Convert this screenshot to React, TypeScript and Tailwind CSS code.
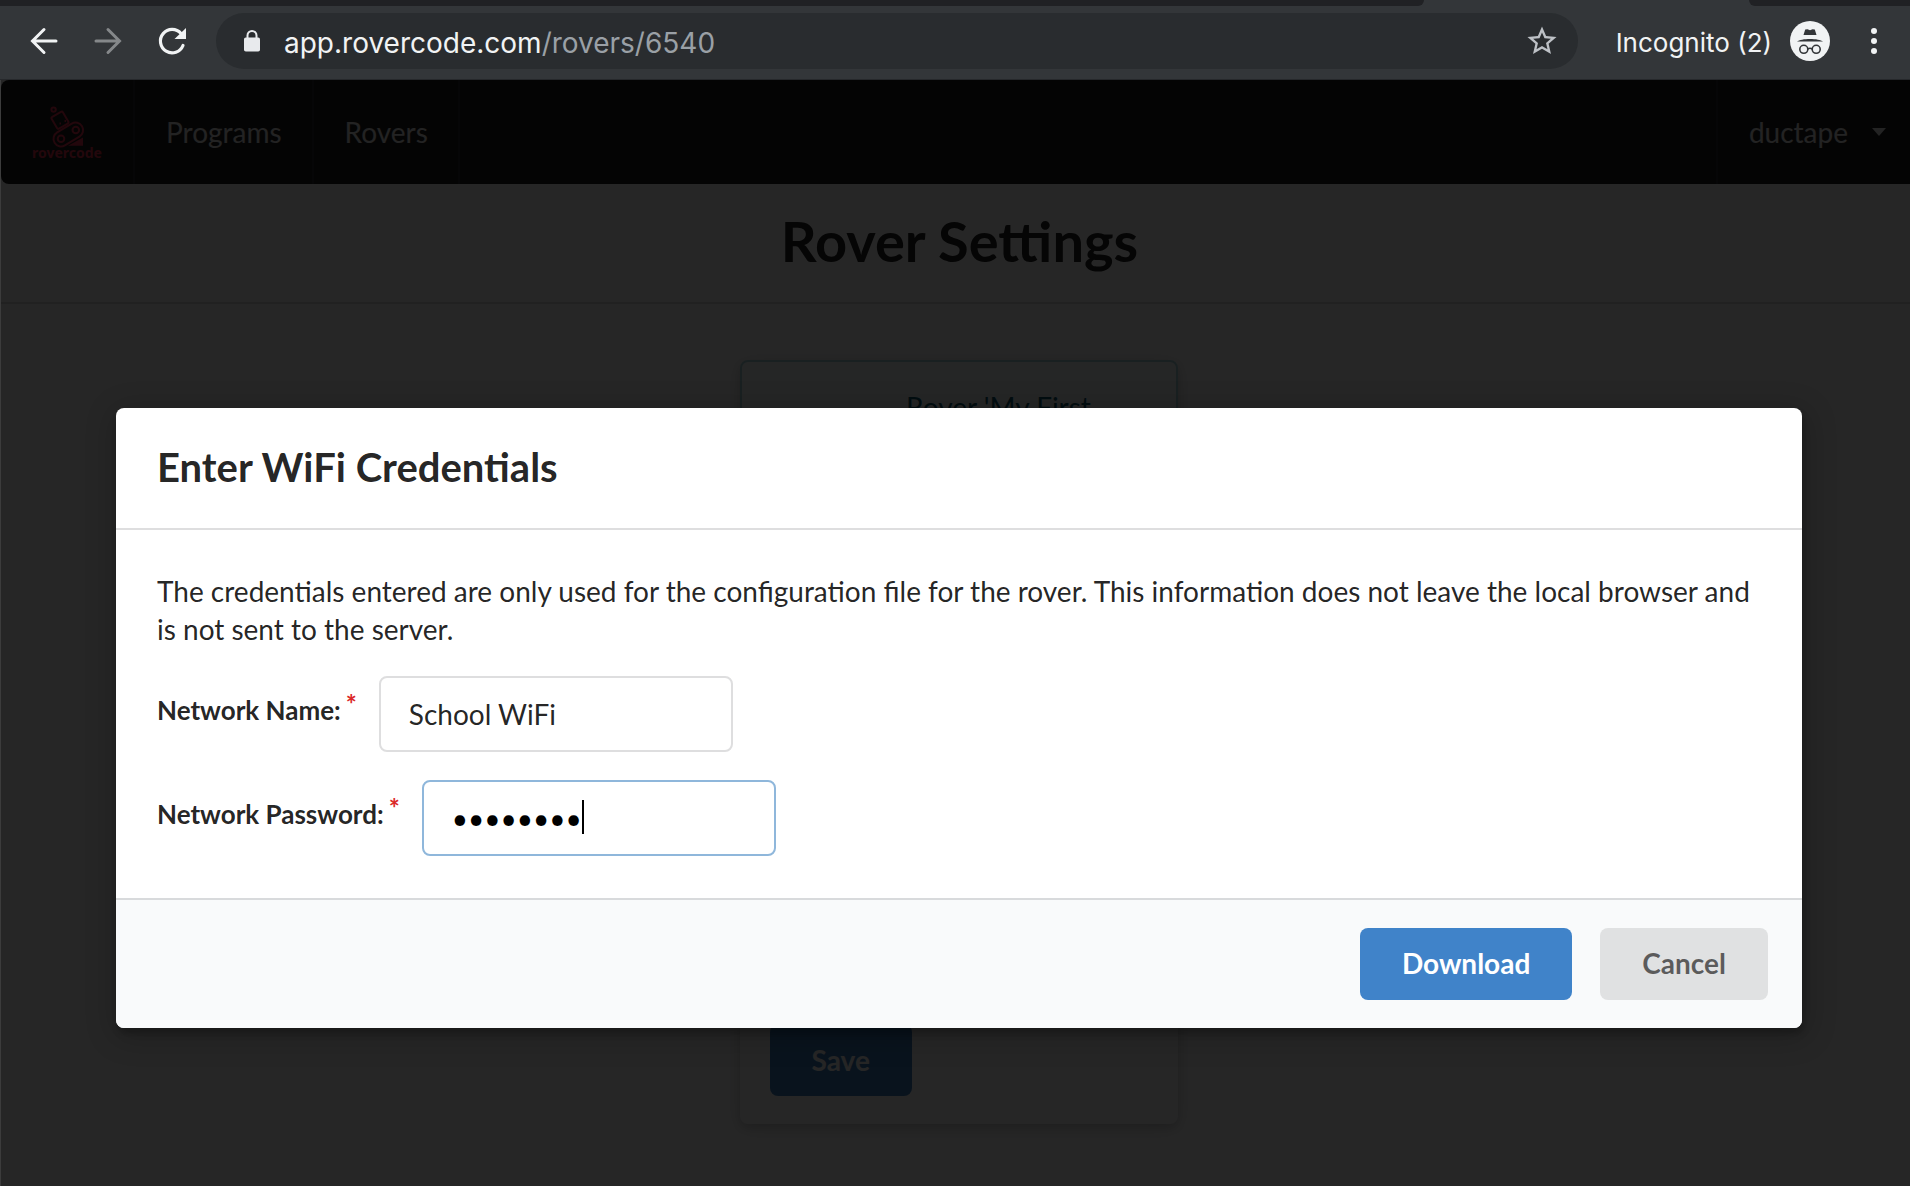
import type { ReactNode } from "react";

function BrowserBar() {
  return (
    <header className="bg-[#333639] font-['Inter',sans-serif]">
      <div className="flex h-1.5 justify-between">
        <div className="w-[1424px] rounded-br-xl bg-[#202124]" />
        <div className="w-[161px] rounded-bl-xl bg-[#202124]" />
      </div>
      <div className="flex h-[74px] items-center border-b border-[#26282b] pt-1 pr-6 pb-2 pl-7">
        <button aria-label="Back" className="mr-8 text-[#f1f3f4]">
          <svg width="32" height="32" viewBox="0 0 32 32" fill="none" stroke="currentColor" strokeWidth="3" strokeLinecap="round">
            <path d="M28 16H5M16 4.500L4.500 16 16 27.500" />
          </svg>
        </button>
        <button aria-label="Forward" className="mr-8 text-[#85888a]">
          <svg width="32" height="32" viewBox="0 0 32 32" fill="none" stroke="currentColor" strokeWidth="3" strokeLinecap="round">
            <path d="M4 16h23M16 4.500L27.500 16 16 27.500" />
          </svg>
        </button>
        <button aria-label="Reload" className="mr-7 text-[#f1f3f4]">
          <svg width="32" height="32" viewBox="0 0 32 32">
            <path d="M27 20.500A11.700 11.700 0 1 1 25 8.500" fill="none" stroke="currentColor" strokeWidth="3.200" strokeLinecap="round" />
            <path d="M30 3v11H18.500z" fill="currentColor" />
          </svg>
        </button>
        <div className="flex h-14 flex-1 items-center rounded-full bg-[#292c2f] pr-5 pl-7">
          <svg width="16" height="22" viewBox="0 0 16 22" className="mr-6 shrink-0" aria-hidden="true">
            <path d="M3.500 9V5.500a4.500 4.500 0 0 1 9 0V9" fill="none" stroke="#e8eaed" strokeWidth="2" />
            <rect x="0" y="7.500" width="16" height="14" rx="1.800" fill="#e8eaed" />
          </svg>
          <p className="flex-1 pt-1 text-[28px] text-[#9aa0a6]">
            <span className="text-[#f1f3f4]">app.rovercode.com</span>/rovers/6540
          </p>
          <button aria-label="Bookmark this page">
            <svg width="32" height="32" viewBox="1 1 22 22" fill="#bdc1c6">
              <path d="M22 9.240l-7.190-.62L12 2 9.190 8.630 2 9.240l5.460 4.730L5.820 21 12 17.270 18.180 21l-1.630-7.030L22 9.240zM12 15.400l-3.760 2.270 1-4.280-3.320-2.880 4.380-.38L12 6.100l1.710 4.040 4.380.38-3.320 2.880 1 4.280L12 15.400z" />
            </svg>
          </button>
        </div>
        <span className="ml-[38px] pt-1 text-[26px] text-[#f1f3f4]">Incognito (2)</span>
        <svg width="40" height="40" viewBox="0 0 40 40" className="mr-8 ml-[18px] shrink-0" aria-hidden="true">
          <circle cx="20" cy="20" r="20" fill="#f1f3f4" />
          <path d="M7 20.500c4-3.500 22-3.500 26 0z" fill="#333639" />
          <path d="M13.500 14l1.700-5.500 2.300-.3 2.500 1 2.500-1 2.300.3 1.700 5.500z" fill="#333639" />
          <g fill="none" stroke="#333639" strokeWidth="1.600">
            <circle cx="13.800" cy="28.300" r="4" />
            <circle cx="26.200" cy="28.300" r="4" />
            <path d="M17.800 28q2.200-1.400 4.400 0" />
          </g>
        </svg>
        <button aria-label="Menu" className="px-2">
          <svg width="8" height="28" viewBox="0 0 8 28" fill="#f1f3f4">
            <circle cx="4" cy="4" r="3" />
            <circle cx="4" cy="14" r="3" />
            <circle cx="4" cy="24" r="3" />
          </svg>
        </button>
      </div>
    </header>
  );
}

function Logo() {
  return (
    <svg width="72" height="64" viewBox="0 -5 72 64" fill="none" stroke="#e8304f" strokeWidth="2" role="img" aria-label="rovercode">
      <circle cx="22.600" cy="4.600" r="2.200" />
      <rect x="22.500" y="8.500" width="13" height="13.500" rx="1.500" transform="rotate(-30 29 15.250)" />
      <rect x="21.300" y="22" width="32" height="15" rx="7.500" transform="rotate(-31 37.300 29.500)" />
      <circle cx="30" cy="33.700" r="3.300" />
      <circle cx="44.800" cy="25" r="3.300" />
      <path d="M37 40.800l15-8.300v8.300z" fill="#e8304f" stroke="none" />
      <path d="M28.500 18.500h1.500M33.500 16h1.500" />
      <text x="36" y="52.500" textAnchor="middle" fill="#e8304f" stroke="none" fontFamily="Noto Sans" fontWeight="700" fontSize="14">rovercode</text>
    </svg>
  );
}

function NavItem({ children }: { children: ReactNode }) {
  return (
    <a href="#" className="flex items-center border-r-2 border-white/8 pr-[30px] pl-[31px] text-white/90">
      {children}
    </a>
  );
}

function SettingsPage() {
  return (
    <>
      <nav className="flex h-[104px] rounded-l-lg bg-[#1b1c1d]">
        <a href="#" className="flex items-center border-r-2 border-white/8 px-[30px]">
          <Logo />
        </a>
        <NavItem>Programs</NavItem>
        <NavItem>Rovers</NavItem>
        <button className="ml-auto flex items-center gap-6 border-l-2 border-white/8 pr-6 pl-[31px] text-white/90">
          ductape
          <svg width="14" height="8" viewBox="0 0 14 8" fill="currentColor" aria-hidden="true">
            <path d="M0 0h14L7 8z" />
          </svg>
        </button>
      </nav>
      <h1 className="border-b-2 border-[#222426]/15 pt-[22px] pb-[26px] pl-2 text-center text-[56px] leading-[70px] font-bold text-black/87">
        Rover Settings
      </h1>
      <main className="flex flex-1 justify-center pt-14 pb-[62px] pl-1.5">
        <section className="flex w-[438px] flex-col justify-between rounded-lg shadow-[0_4px_8px_rgba(34,36,38,0.12),0_4px_20px_rgba(34,36,38,0.15)]">
          <div className="rounded-lg border-2 border-[#a9d5de] bg-[#f8ffff] py-6 pl-20 text-center text-[#0e566c]">
            Rover 'My First
          </div>
          <form className="px-[30px] py-7">
            <button type="button" className="rounded-lg bg-[#4183c4] px-[42px] py-4 leading-10 font-bold text-white">
              Save
            </button>
          </form>
        </section>
      </main>
    </>
  );
}

function Field({ id, label, children }: { id: string; label: string; children: ReactNode }) {
  return (
    <div className="flex items-center">
      <label htmlFor={id} className="mr-[22px] flex pb-2 text-[26px] font-bold">
        {label}
        <span className="ml-[5px] -translate-y-1.5 text-[#db2828]">*</span>
      </label>
      {children}
    </div>
  );
}

function CredentialsModal() {
  return (
    <div
      role="dialog"
      aria-labelledby="modal-title"
      className="overflow-hidden rounded-lg bg-white text-black/87 shadow-[2px_6px_6px_rgba(0,0,0,0.2),2px_6px_30px_4px_rgba(0,0,0,0.2)]"
    >
      <h2 id="modal-title" className="border-b-2 border-[#dededf] px-[41px] pt-[33px] pb-[35px] text-[40px] leading-[52px] font-bold">
        Enter WiFi Credentials
      </h2>
      <form className="flex flex-col gap-7 px-[41px] py-[42px]">
        <p className="leading-[38px]">
          The credentials entered are only used for the configuration file for the rover. This information does not
          leave the local browser and is not sent to the server.
        </p>
        <Field id="network-name" label="Network Name:">
          <input
            id="network-name"
            type="text"
            defaultValue="School WiFi"
            className="h-[76px] w-[354px] rounded-lg border-2 border-[#dededf] px-7 outline-none"
          />
        </Field>
        <Field id="network-password" label="Network Password:">
          <div className="relative">
            <input
              id="network-password"
              type="password"
              defaultValue="password"
              className="h-[76px] w-[354px] rounded-lg border-2 border-[#8fb7db] px-7 text-black outline-none"
            />
            <span className="absolute top-5 left-40 h-[34px] w-0.5 bg-black" />
          </div>
        </Field>
      </form>
      <div className="flex justify-end gap-7 border-t-2 border-[#d8dadc] bg-[#f9fafb] py-7 pr-[34px] leading-10 font-bold">
        <button className="rounded-lg bg-[#4083c9] px-[42px] pt-[15px] pb-[17px] text-white">Download</button>
        <button className="rounded-lg bg-[#e0e1e2] px-[42px] pt-[15px] pb-[17px] text-black/60">Cancel</button>
      </div>
    </div>
  );
}

export default function App() {
  return (
    <div className="flex min-h-screen flex-col">
      <BrowserBar />
      <div className="relative flex flex-1 flex-col border-l border-[#3c3c3c] bg-white font-['Lato',sans-serif] text-[28px]">
        <SettingsPage />
        <div className="absolute inset-0 bg-black/85 pt-[328px] pr-[108px] pl-[115px]">
          <CredentialsModal />
        </div>
      </div>
    </div>
  );
}
